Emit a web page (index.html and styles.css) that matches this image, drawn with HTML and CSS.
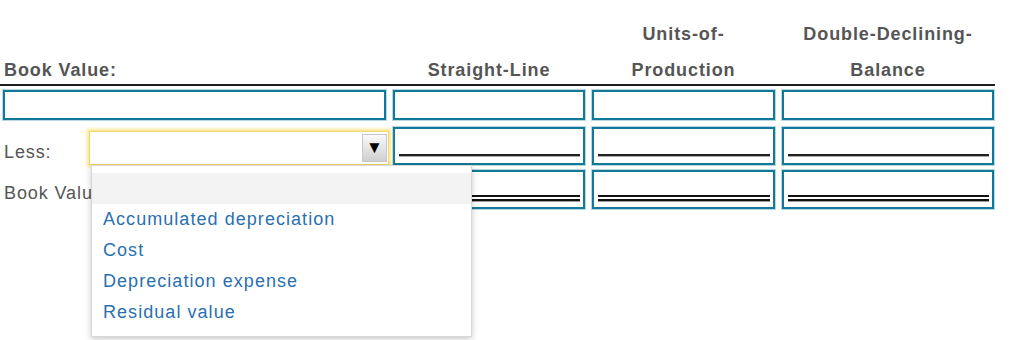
FILE: index.html
```html
<!DOCTYPE html>
<html lang="en">
<head>
  <meta charset="UTF-8" />
  <title>Depreciation Methods</title>
  <link rel="stylesheet" href="styles.css">
</head>
<body>
  <div class="sheet">
    <div class="grid head">
      <div class="hd hd-left"><br>Book Value:</div>
      <div class="hd"><br>Straight-Line</div>
      <div class="hd">Units-of-<br>Production</div>
      <div class="hd">Double-Declining-<br>Balance</div>
    </div>

    <div class="grid row r1">
      <div class="field"></div>
      <div class="field"></div>
      <div class="field"></div>
      <div class="field"></div>
    </div>

    <div class="grid row r2">
      <div class="lbl-cell">
        <span class="lbl lbl-less">Less:</span>
        <div class="select">
          <span class="arrow">&#9660;</span>
          <ul class="menu">
            <li class="active">&nbsp;</li>
            <li>Accumulated depreciation</li>
            <li>Cost</li>
            <li>Depreciation expense</li>
            <li>Residual value</li>
          </ul>
        </div>
      </div>
      <div class="field"><span class="rule single"></span></div>
      <div class="field"><span class="rule single"></span></div>
      <div class="field"><span class="rule single"></span></div>
    </div>

    <div class="grid row r3">
      <div class="lbl-cell">
        <span class="lbl lbl-book">Book Value, end of year:</span>
      </div>
      <div class="field"><span class="rule double"></span></div>
      <div class="field"><span class="rule double"></span></div>
      <div class="field"><span class="rule double"></span></div>
    </div>
  </div>
</body>
</html>
```

FILE: styles.css
```css
html, body {
  min-height: 340px;
}
body {
  margin: 0;
  background: #fff;
  font-family: 'Liberation Sans', Arial, sans-serif;
  font-size: 18px;
  letter-spacing: 0.9px;
  color: #555;
}
.sheet {
  width: 995px;
  padding-bottom: 130px;
}
.grid {
  display: grid;
  grid-template-columns: 383px 192px 183px 212px;
  column-gap: 7px;
  padding-left: 3px;
}
.head {
  padding-top: 16px;
  border-bottom: 2px solid #1d1d1d;
}
.hd {
  height: 68px;
  line-height: 36px;
  font-weight: bold;
  text-align: center;
  color: #555;
  white-space: nowrap;
}
.hd-left {
  text-align: left;
  padding-left: 1px;
}
.row {
  margin-top: 7px;
}
.r1 {
  margin-top: 4px;
  height: 30px;
}
.r2 {
  height: 36px;
}
.r3 {
  height: 39px;
}
.field {
  box-sizing: border-box;
  border: 2px solid #13799b;
  box-shadow: 0 0 0 1px rgba(19, 121, 155, 0.3);
  background: #fff;
  display: flex;
  align-items: flex-end;
  padding: 0 3px 6px 4px;
}
.rule {
  display: block;
  width: 100%;
}
.rule.single {
  border-bottom: 2px solid #222;
  box-shadow: 0 1px 0 #aaa;
  margin-bottom: 1px;
}
.rule.double {
  border-bottom: 6px double #111;
  box-shadow: 0 1px 0 #999;
}
.lbl-cell {
  display: flex;
  align-items: flex-start;
  position: relative;
}
.lbl {
  line-height: 20px;
  color: #555;
  white-space: nowrap;
}
.lbl-less {
  margin-top: 15px;
  width: 85px;
  flex: none;
  padding-left: 1px;
}
.lbl-book {
  margin-top: 13px;
  padding-left: 1px;
}
.select {
  position: relative;
  flex: none;
  box-sizing: border-box;
  width: 300px;
  height: 34px;
  margin-top: 4px;
  border: 1px solid #f1d766;
  box-shadow: 0 0 3px 2px #fbe58c;
  background: #fff;
  z-index: 2;
}
.arrow {
  position: absolute;
  right: 1px;
  top: 2px;
  width: 25px;
  height: 28px;
  box-sizing: border-box;
  border: 1px solid #c8c8c8;
  background: linear-gradient(#fafafa, #cfcfcf);
  color: #000;
  font-size: 17px;
  letter-spacing: 0;
  line-height: 26px;
  text-align: center;
}
.menu {
  position: absolute;
  left: 1px;
  top: 33px;
  width: 381px;
  box-sizing: border-box;
  margin: 0;
  padding: 7px 0 8px;
  list-style: none;
  background: #fff;
  border: 1px solid #d8d8d8;
  box-shadow: 0 2px 6px rgba(0, 0, 0, 0.22);
}
.menu li {
  height: 31px;
  line-height: 31px;
  padding-left: 11px;
  color: #2a70b0;
  letter-spacing: 1.05px;
  white-space: nowrap;
}
.menu li.active {
  background: #f3f3f3;
}
```
